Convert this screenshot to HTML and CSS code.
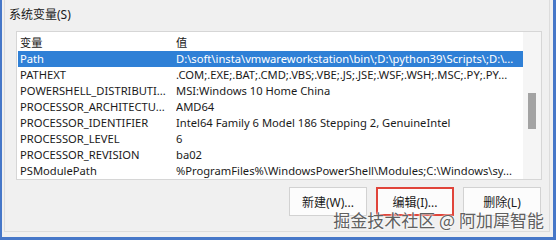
FILE: index.html
```html
<!DOCTYPE html>
<html lang="zh-CN">
<head>
    <meta charset="UTF-8">
    <meta name="viewport" content="width=device-width, initial-scale=1.0">
    <title>系统变量</title>
    <link rel="stylesheet" href="styles.css">
</head>
<body>
    <div class="window">
        <div class="group">
            <div class="group-title">系统变量(<u>S</u>)</div>
            <div class="listbox">
                <div class="rows">
                    <div class="row head"><span class="name">变量</span><span class="value">值</span></div>
                    <div class="row selected"><span class="name">Path</span><span class="value">D:\soft\insta\vmwareworkstation\bin\;D:\python39\Scripts\;D:\...</span></div>
                    <div class="row"><span class="name">PATHEXT</span><span class="value">.COM;.EXE;.BAT;.CMD;.VBS;.VBE;.JS;.JSE;.WSF;.WSH;.MSC;.PY;.PY...</span></div>
                    <div class="row"><span class="name">POWERSHELL_DISTRIBUTI...</span><span class="value">MSI:Windows 10 Home China</span></div>
                    <div class="row"><span class="name">PROCESSOR_ARCHITECTU...</span><span class="value">AMD64</span></div>
                    <div class="row"><span class="name">PROCESSOR_IDENTIFIER</span><span class="value">Intel64 Family 6 Model 186 Stepping 2, GenuineIntel</span></div>
                    <div class="row"><span class="name">PROCESSOR_LEVEL</span><span class="value">6</span></div>
                    <div class="row"><span class="name">PROCESSOR_REVISION</span><span class="value">ba02</span></div>
                    <div class="row"><span class="name">PSModulePath</span><span class="value">%ProgramFiles%\WindowsPowerShell\Modules;C:\Windows\sy...</span></div>
                </div>
                <div class="scrollbar"><div class="thumb"></div></div>
            </div>
            <div class="buttons">
                <button class="btn">新建(<u>W</u>)...</button>
                <button class="btn marked">编辑(<u>I</u>)...</button>
                <button class="btn">删除(<u>L</u>)</button>
            </div>
        </div>
        <div class="watermark">掘金技术社区 @ 阿加犀智能</div>
    </div>
</body>
</html>
```

FILE: styles.css
```css
* {
box-sizing: border-box;
margin: 0;
padding: 0;
}

html, body {
width: 556px;
height: 240px;
overflow: hidden;
}

body {
background-color: #f0f0f0;
font-family: "Noto Sans", "Noto Sans CJK SC", sans-serif;
font-size: 12px;
color: #1a1a1a;
}

.window {
position: relative;
height: 240px;
border-left: 2px solid #4677c8;
border-right: 3px solid #4677c8;
border-bottom: 3px solid #4677c8;
padding: 0 3px 5px 2px;
}

.group {
height: 100%;
border: 1px solid #dcdcdc;
border-top: none;
padding: 7px 0 0 4px;
}

.group-title {
line-height: 16px;
height: 16px;
}

u {
text-decoration: none;
}

.listbox {
display: flex;
margin: 8px 0 0 7px;
width: 526px;
height: 149px;
background: #fff;
border: 1px solid #d6d6d6;
}

.rows {
flex: 1;
padding-left: 1px;
overflow: hidden;
font-size: 11.2px;
}

.row {
display: flex;
height: 16px;
line-height: 16px;
white-space: nowrap;
}

.row.head {
height: 19px;
line-height: 21px;
}

.row.selected {
background: #2f80d6;
color: #fff;
}

.name {
width: 158px;
padding-left: 2px;
overflow: hidden;
}

.value {
flex: 1;
overflow: hidden;
}

.scrollbar {
width: 18px;
background: #f5f5f5;
padding: 61px 0 0 5px;
}

.thumb {
width: 8px;
height: 36px;
background: #a3a3a3;
}

.buttons {
display: flex;
justify-content: flex-end;
gap: 9px;
margin: 7px 8px 0 0;
}

.btn {
width: 78px;
height: 29px;
background: #fcfcfc;
border: 1px solid #d2d2d2;
font-family: inherit;
font-size: 12px;
color: #1a1a1a;
}

.btn.marked {
border: 2px solid #e0443a;
}

.watermark {
position: absolute;
right: 9px;
bottom: 7px;
font-family: "Noto Sans CJK SC", sans-serif;
font-size: 17px;
line-height: 20px;
color: #606060;
text-shadow: 0 0 2px #fff, 0 0 2px #fff;
}
```
